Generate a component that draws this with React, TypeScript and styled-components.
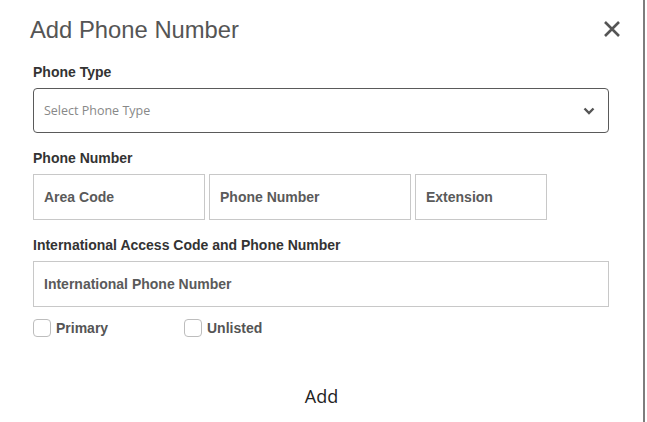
import styled, { createGlobalStyle } from 'styled-components';

const GlobalStyle = createGlobalStyle`
  html, body {
    margin: 0;
    padding: 0;
    background: #fff;
  }
  body {
    font-family: "Liberation Sans", Arial, sans-serif;
  }
`;

const Dialog = styled.div`
  width: 645px;
  height: 422px;
  box-sizing: border-box;
  border-right: 2px solid #7d7d7d;
  background: #fff;
  display: flex;
  flex-direction: column;
`;

const Header = styled.div`
  display: flex;
  justify-content: space-between;
  align-items: flex-start;
  padding: 15px 22px 0 30px;
`;

const Title = styled.h2`
  margin: 0;
  font-family: "Liberation Sans", Arial, sans-serif;
  font-weight: normal;
  font-size: 23.8px;
  line-height: 30px;
  color: #555;
`;

const CloseButton = styled.button`
  border: none;
  background: none;
  padding: 0;
  margin-top: 5px;
  width: 18px;
  height: 18px;
  display: flex;
  cursor: pointer;
`;

const Form = styled.div`
  padding: 19px 34px 0 33px;
  display: flex;
  flex-direction: column;
`;

const Label = styled.div<{ $gap?: number }>`
  font-family: "Liberation Sans", Arial, sans-serif;
  font-weight: bold;
  font-size: 14px;
  line-height: 16px;
  color: #333;
  margin-top: ${(p) => p.$gap ?? 17}px;
  margin-bottom: 8px;
`;

const SelectBox = styled.div`
  height: 45px;
  box-sizing: border-box;
  border: 1px solid #5a5a5a;
  border-radius: 4px;
  display: flex;
  align-items: center;
  justify-content: space-between;
  padding: 0 13px 0 10px;
  font-family: "Open Sans", sans-serif;
  font-size: 12.5px;
  color: #888;
`;

const InputRow = styled.div`
  display: flex;
  gap: 4px;
`;

const TextInput = styled.input<{ $width?: number }>`
  width: ${(p) => (p.$width ? `${p.$width}px` : '100%')};
  height: 46px;
  box-sizing: border-box;
  border: 1px solid #c8c8c8;
  border-radius: 0;
  padding: 0 10px;
  font-family: "Liberation Sans", Arial, sans-serif;
  font-weight: bold;
  font-size: 14px;
  color: #555;
  outline: none;

  &::placeholder {
    color: #5a5a5a;
    opacity: 1;
  }
`;

const CheckRow = styled.div`
  display: flex;
  margin-top: 12px;
`;

const CheckItem = styled.label<{ $width?: number }>`
  display: flex;
  align-items: center;
  gap: 5px;
  width: ${(p) => (p.$width ? `${p.$width}px` : 'auto')};
  font-family: "Liberation Sans", Arial, sans-serif;
  font-weight: bold;
  font-size: 14px;
  color: #555;
`;

const CheckBox = styled.input`
  appearance: none;
  margin: 0;
  width: 18px;
  height: 18px;
  box-sizing: border-box;
  border: 1px solid #bdbdbd;
  border-radius: 4px;
  background: #fff;
`;

const Footer = styled.div`
  margin-top: 47px;
  display: flex;
  justify-content: center;
`;

const AddButton = styled.button`
  border: none;
  background: none;
  padding: 0;
  font-family: "Open Sans", sans-serif;
  font-size: 18px;
  line-height: 24px;
  color: #222;
  cursor: pointer;
`;

const App = () => {
  return (
    <>
      <GlobalStyle />
      <Dialog>
        <Header>
          <Title>Add Phone Number</Title>
          <CloseButton aria-label="Close">
            <svg width="18" height="18" viewBox="0 0 18 18">
              <path d="M2 2 L16 16 M16 2 L2 16" stroke="#555" strokeWidth="2.6" strokeLinecap="butt" />
            </svg>
          </CloseButton>
        </Header>
        <Form>
          <Label $gap={0}>Phone Type</Label>
          <SelectBox>
            <span>Select Phone Type</span>
            <svg width="12" height="8" viewBox="0 0 12 8">
              <path d="M1.5 1.5 L6 6 L10.5 1.5" fill="none" stroke="#555" strokeWidth="2.4" />
            </svg>
          </SelectBox>

          <Label>Phone Number</Label>
          <InputRow>
            <TextInput $width={172} placeholder="Area Code" />
            <TextInput $width={202} placeholder="Phone Number" />
            <TextInput $width={132} placeholder="Extension" />
          </InputRow>

          <Label>International Access Code and Phone Number</Label>
          <TextInput placeholder="International Phone Number" />

          <CheckRow>
            <CheckItem $width={151}>
              <CheckBox type="checkbox" />
              Primary
            </CheckItem>
            <CheckItem>
              <CheckBox type="checkbox" />
              Unlisted
            </CheckItem>
          </CheckRow>
        </Form>
        <Footer>
          <AddButton>Add</AddButton>
        </Footer>
      </Dialog>
    </>
  );
};

export default App;
